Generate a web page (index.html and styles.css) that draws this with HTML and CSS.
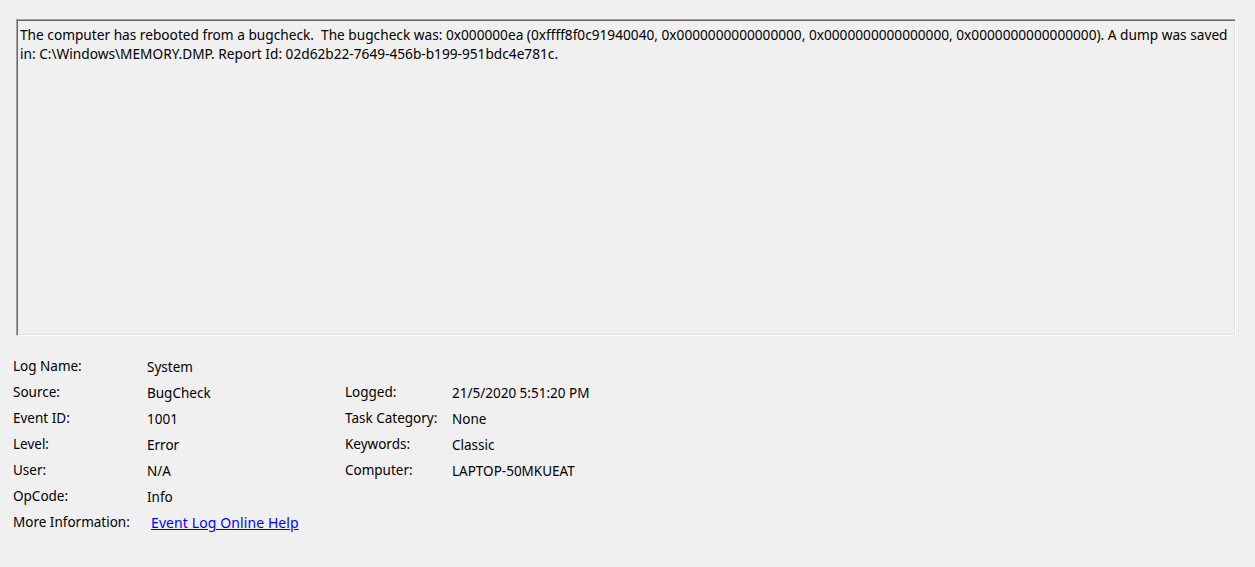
FILE: index.html
```html
<!DOCTYPE html>
<html>
<head>
<meta charset="utf-8">
<link rel="stylesheet" href="styles.css">
</head>
<body>
<div class="page">
  <div class="desc">The computer has rebooted from a bugcheck.&nbsp; The bugcheck was: 0x000000ea (0xffff8f0c91940040, 0x0000000000000000, 0x0000000000000000, 0x0000000000000000). A dump was saved<br>in: C:\Windows\MEMORY.DMP. Report Id: 02d62b22-7649-456b-b199-951bdc4e781c.</div>
  <div class="details">
    <div class="lbl">Log Name:</div><div class="val">System</div><div class="lbl2"></div><div class="val2"></div>
    <div class="lbl">Source:</div><div class="val">BugCheck</div><div class="lbl2">Logged:</div><div class="val2">21/5/2020 5:51:20 PM</div>
    <div class="lbl">Event ID:</div><div class="val">1001</div><div class="lbl2">Task Category:</div><div class="val2">None</div>
    <div class="lbl">Level:</div><div class="val">Error</div><div class="lbl2">Keywords:</div><div class="val2">Classic</div>
    <div class="lbl">User:</div><div class="val">N/A</div><div class="lbl2">Computer:</div><div class="val2">LAPTOP-50MKUEAT</div>
    <div class="lbl">OpCode:</div><div class="val">Info</div><div class="lbl2"></div><div class="val2"></div>
    <div class="lbl">More Information:</div><div class="val link-cell"><a class="link" href="#">Event Log Online Help</a></div><div class="lbl2"></div><div class="val2"></div>
  </div>
</div>
</body>
</html>
```
FILE: styles.css
```css
html, body {
  margin: 0;
  padding: 0;
  background: #f0f0f0;
}
body {
  width: 1255px;
  height: 567px;
  overflow: hidden;
  font-family: "Noto Sans", "Open Sans", sans-serif;
  font-size: 13.5px;
  color: #000;
}
.page {
  padding: 19px 0 0 0;
}
.desc {
  margin-left: 16px;
  width: 1220px;
  height: 317px;
  box-sizing: border-box;
  border-top: 1px solid #a0a0a0;
  border-left: 1px solid #a0a0a0;
  border-right: 1px solid #ffffff;
  border-bottom: 1px solid #ffffff;
  box-shadow: inset 1px 1px 0 #696969, inset -1px -1px 0 #e3e3e3;
  padding: 5px 3px 0 3px;
  font-size: 13.68px;
  line-height: 19px;
  white-space: nowrap;
  overflow: hidden;
}
.details {
  display: grid;
  grid-template-columns: 134px 198px 107px 200px;
  grid-template-rows: repeat(6, 26px) 27px;
  margin-top: 18px;
  margin-left: 13px;
  line-height: 26px;
}
.lbl, .lbl2 {
  position: relative;
  top: -1px;
}
.link-cell {
  padding-left: 4px;
}
.link {
  color: #0000ff;
  text-decoration: underline;
  font-size: 14px;
  letter-spacing: 0.1px;
}
```
